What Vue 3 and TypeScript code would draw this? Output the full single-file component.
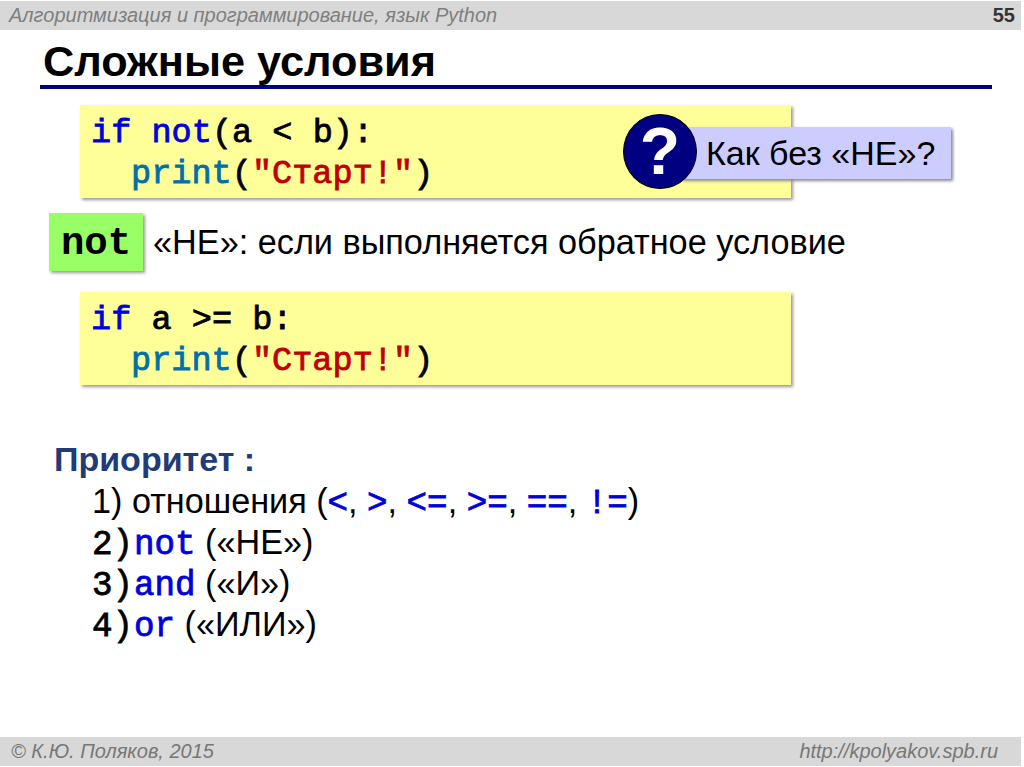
<script setup lang="ts">
interface Item { num: string; kw: string; rest: string }
const items: Item[] = [
  { num: '2)', kw: 'not', rest: '(«НЕ»)' },
  { num: '3)', kw: 'and', rest: '(«И»)' },
  { num: '4)', kw: 'or', rest: '(«ИЛИ»)' },
]
</script>

<template>
  <div class="slide">
    <header class="top">
      <span class="course">Алгоритмизация и программирование, язык Python</span>
      <span class="page">55</span>
    </header>
    <h1 class="title">Сложные условия</h1>
    <div class="code first">
      <div><span class="kw">if not</span>(a &lt; b):</div>
      <div class="ind"><span class="fn">print</span>(<span class="str">"Старт!"</span>)</div>
      <div class="callout">
        <div class="bubble">?</div>
        <div class="label">Как без «НЕ»?</div>
      </div>
    </div>
    <div class="note">
      <span class="tag">not</span>
      <span class="note-text">«НЕ»: если выполняется обратное условие</span>
    </div>
    <div class="code second">
      <div><span class="kw">if</span> a &gt;= b:</div>
      <div class="ind"><span class="fn">print</span>(<span class="str">"Старт!"</span>)</div>
    </div>
    <section class="prio">
      <div class="prio-head">Приоритет :</div>
      <ol class="prio-list">
        <li>1) отношения (<span class="op">&lt;</span>, <span class="op">&gt;</span>, <span class="op">&lt;=</span>, <span class="op">&gt;=</span>, <span class="op">==</span>, <span class="op">!=</span>)</li>
        <li v-for="it in items" :key="it.num"><span class="num">{{ it.num }}</span><span class="kw2">{{ it.kw }}</span> {{ it.rest }}</li>
      </ol>
    </section>
    <footer class="bottom">
      <span>© К.Ю. Поляков, 2015</span>
      <span>http://kpolyakov.spb.ru</span>
    </footer>
  </div>
</template>

<style>
html, body { margin: 0; background: #fff; }
</style>

<style scoped>
.slide {
  width: 1024px;
  height: 767px;
  box-sizing: border-box;
  padding-top: 1px;
  display: flex;
  flex-direction: column;
  font-family: "Liberation Sans", Arial, sans-serif;
  color: #000;
  background: #fff;
  overflow: hidden;
}
.top {
  height: 29px;
  margin-right: 3px;
  flex: none;
  background: #d8d8d8;
  display: flex;
  justify-content: space-between;
  align-items: center;
  padding: 0 6px 0 9px;
}
.course {
  font-style: italic;
  font-size: 20px;
  color: #7f7f7f;
}
.page {
  font-weight: 700;
  font-size: 20px;
  color: #333;
}
.title {
  margin: 0 32px 16px 40px;
  padding: 8px 0 0 3px;
  height: 47px;
  box-sizing: content-box;
  border-bottom: 4px solid #000080;
  font-size: 43.3px;
  line-height: 46px;
  font-weight: 700;
}
.code {
  position: relative;
  width: 711px;
  height: 93px;
  margin-left: 80px;
  box-sizing: border-box;
  padding: 8px 0 0 11px;
  flex: none;
  background: #ffff99;
  box-shadow: 2px 2px 3px #999;
  font-family: "Liberation Mono", "Courier New", monospace;
  font-weight: 400;
  -webkit-text-stroke: 0.8px currentColor;
  font-size: 33.6px;
  line-height: 41px;
}
.ind { padding-left: 40px; }
.kw { color: #0000dd; }
.fn { color: #0070a8; }
.str { color: #c00000; }
.callout {
  position: absolute;
  left: 543px;
  top: 9px;
  width: 330px;
  height: 75px;
  -webkit-text-stroke: 0;
}
.bubble {
  position: absolute;
  left: 0;
  top: 0;
  z-index: 1;
  width: 74px;
  height: 75px;
  box-sizing: border-box;
  border: 1px solid #000;
  border-radius: 50%;
  background: #000080;
  color: #fff;
  font-family: "Liberation Sans", Arial, sans-serif;
  font-weight: 700;
  font-size: 66px;
  line-height: 73px;
  text-align: center;
}
.label {
  position: absolute;
  left: 58px;
  top: 13px;
  width: 270px;
  height: 52px;
  box-sizing: border-box;
  padding-left: 25px;
  background: #ccccff;
  box-shadow: 2px 2px 3px #888;
  font-family: "Liberation Sans", Arial, sans-serif;
  font-weight: 400;
  font-size: 34px;
  line-height: 52px;
  white-space: nowrap;
}
.note {
  display: flex;
  align-items: center;
  height: 58px;
  margin: 15px 0 21px 49px;
  flex: none;
}
.tag {
  width: 94px;
  height: 58px;
  box-sizing: border-box;
  background: #99ff66;
  box-shadow: 2px 2px 3px #999;
  font-family: "Liberation Mono", "Courier New", monospace;
  font-weight: 700;
  font-size: 39px;
  line-height: 63px;
  text-align: center;
}
.note-text {
  margin-left: 10px;
  font-size: 34.25px;
}
.prio {
  margin: 54px 0 0 54px;
  flex: 1;
}
.prio-head {
  font-weight: 700;
  font-size: 34px;
  line-height: 41px;
  color: #1f3b78;
}
.prio-list {
  list-style: none;
  margin: 0;
  padding: 1px 0 0 38px;
  font-size: 34.2px;
}
.prio-list li {
  height: 41px;
  line-height: 41px;
}
.op {
  color: #0000dd;
  font-family: "Liberation Mono", monospace;
  line-height: 1;
  -webkit-text-stroke: 0.8px currentColor;
}
.num {
  font-family: "Liberation Mono", monospace;
  line-height: 1;
  -webkit-text-stroke: 0.8px currentColor;
  margin-right: 1px;
}
.kw2 {
  color: #0000dd;
  font-family: "Liberation Mono", monospace;
  line-height: 1;
  -webkit-text-stroke: 0.8px currentColor;
}
.bottom {
  height: 29px;
  margin-right: 3px;
  margin-bottom: 1px;
  flex: none;
  background: #d8d8d8;
  display: flex;
  justify-content: space-between;
  align-items: center;
  padding: 0 23px 0 11px;
  font-style: italic;
  font-size: 20px;
  color: #777;
}
</style>
